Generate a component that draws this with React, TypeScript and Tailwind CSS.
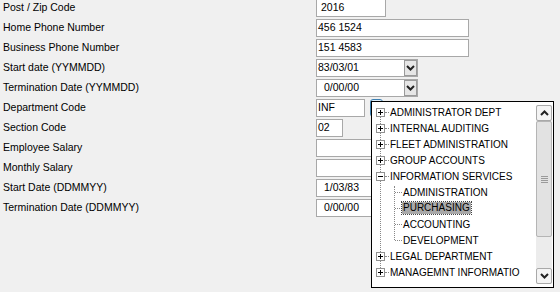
import React from "react";

type Field = { label: string; value?: string; w: number; kind?: "text" | "combo"; pad?: number };

const fields: Field[] = [
  { label: "Post / Zip Code", value: "2016", w: 70, pad: 3 },
  { label: "Home Phone Number", value: "456 1524", w: 153 },
  { label: "Business Phone Number", value: "151 4583", w: 153 },
  { label: "Start date (YYMMDD)", value: "83/03/01", w: 102, kind: "combo" },
  { label: "Termination Date (YYMMDD)", value: "0/00/00", w: 102, kind: "combo", pad: 6 },
  { label: "Department Code", value: "INF", w: 49 },
  { label: "Section Code", value: "02", w: 27 },
  { label: "Employee Salary", value: "", w: 70 },
  { label: "Monthly Salary", value: "", w: 70 },
  { label: "Start Date (DDMMYY)", value: "1/03/83", w: 70, pad: 6 },
  { label: "Termination Date (DDMMYY)", value: "0/00/00", w: 70, pad: 6 },
];

type Node = { label: string; level: 0 | 1; kind: "plus" | "minus" | "leaf"; selected?: boolean };

const tree: Node[] = [
  { label: "ADMINISTRATOR DEPT", level: 0, kind: "plus" },
  { label: "INTERNAL AUDITING", level: 0, kind: "plus" },
  { label: "FLEET ADMINISTRATION", level: 0, kind: "plus" },
  { label: "GROUP ACCOUNTS", level: 0, kind: "plus" },
  { label: "INFORMATION SERVICES", level: 0, kind: "minus" },
  { label: "ADMINISTRATION", level: 1, kind: "leaf" },
  { label: "PURCHASING", level: 1, kind: "leaf", selected: true },
  { label: "ACCOUNTING", level: 1, kind: "leaf" },
  { label: "DEVELOPMENT", level: 1, kind: "leaf" },
  { label: "LEGAL DEPARTMENT", level: 0, kind: "plus" },
  { label: "MANAGEMNT INFORMATIO", level: 0, kind: "plus" },
];

const Chevron = ({ up }: { up?: boolean }) => (
  <svg width="9" height="6" viewBox="0 0 9 6" className="block">
    <path
      d={up ? "M1 5 L4.5 1.5 L8 5" : "M1 1 L4.5 4.5 L8 1"}
      fill="none"
      stroke="#222"
      strokeWidth="2"
    />
  </svg>
);

const ExpandBox = ({ minus }: { minus?: boolean }) => (
  <div className="w-[9px] h-[9px] border border-[#919191] bg-white relative shrink-0">
    <div className="absolute left-[1px] top-[3px] w-[5px] h-px bg-black" />
    {!minus && <div className="absolute left-[3px] top-[1px] w-px h-[5px] bg-black" />}
  </div>
);

const TreeRow = ({ n }: { n: Node }) => {
  if (n.level === 0) {
    return (
      <div className="h-4 flex items-center pl-[4px]">
        <ExpandBox minus={n.kind === "minus"} />
        <div className="w-[4px] border-t border-dotted border-[#888]" />
        <span className="pl-[1px]">{n.label}</span>
      </div>
    );
  }
  return (
    <div className="h-4 flex items-center pl-[23px]">
      <div className="w-[7px] border-t border-dotted border-[#888]" />
      <span
        className={
          n.selected
            ? "px-[1px] leading-[12px] bg-[#a9a9a9] outline outline-1 outline-dotted outline-[#444]"
            : "px-[1px]"
        }
      >
        {n.label}
      </span>
    </div>
  );
};

export default function App() {
  return (
    <div className="relative w-[560px] h-[292px] overflow-hidden bg-[#f0f0f0] text-black text-[10.5px] font-['Liberation_Sans',Arial,sans-serif]">
      <div className="flex flex-col -mt-px">
        {fields.map((f, i) => (
          <div key={i} className="h-5 flex items-start">
            <div className="w-[316px] h-[18px] flex items-center pl-[3px]">{f.label}</div>
            <div
              className="h-[18px] bg-white border border-[#a8a8a8] flex items-center pl-[1px] justify-between"
              style={{ width: f.w, paddingLeft: 1 + (f.pad ?? 0) }}
            >
              <span>{f.value}</span>
              {f.kind === "combo" && (
                <div className="w-[13px] h-[16px] border border-[#9a9a9a] bg-[#e6e6e6] flex items-center justify-center">
                  <Chevron />
                </div>
              )}
            </div>
            {i === 5 && (
              <div className="ml-[5px] w-[13px] h-[18px] border border-[#3c7fb1] rounded-[3px] bg-[#dcecf8]" />
            )}
          </div>
        ))}
      </div>

      {/* dropdown tree */}
      <div className="absolute left-[371px] top-[101px] w-[183px] h-[187px] bg-white border border-black flex text-[10px]">
        <div className="relative flex-1 pt-[2px]">
          <div className="absolute left-[8px] top-[14px] h-[160px] border-l border-dotted border-[#888]" />
          <div className="absolute left-[22px] top-[84px] h-[54px] border-l border-dotted border-[#888]" />
          <div className="relative">
            {tree.map((n, i) => (
              <TreeRow key={i} n={n} />
            ))}
          </div>
        </div>
        <div className="w-[16px] mr-[1px] my-[3px] flex flex-col bg-[#ececec]">
          <div className="h-[16px] border border-[#a9a9a9] rounded-[2px] bg-[#f4f4f4] flex items-center justify-center">
            <Chevron up />
          </div>
          <div className="h-[116px] border border-[#b5b5b5] rounded-[2px] bg-[#e2e2e2] flex flex-col items-center justify-center gap-[1px]">
            <div className="w-[7px] h-px bg-[#9a9a9a]" />
            <div className="w-[7px] h-px bg-[#9a9a9a]" />
            <div className="w-[7px] h-px bg-[#9a9a9a]" />
            <div className="w-[7px] h-px bg-[#9a9a9a]" />
          </div>
          <div className="flex-1" />
          <div className="h-[16px] border border-[#a9a9a9] rounded-[2px] bg-[#f4f4f4] flex items-center justify-center">
            <Chevron />
          </div>
        </div>
      </div>
    </div>
  );
}
